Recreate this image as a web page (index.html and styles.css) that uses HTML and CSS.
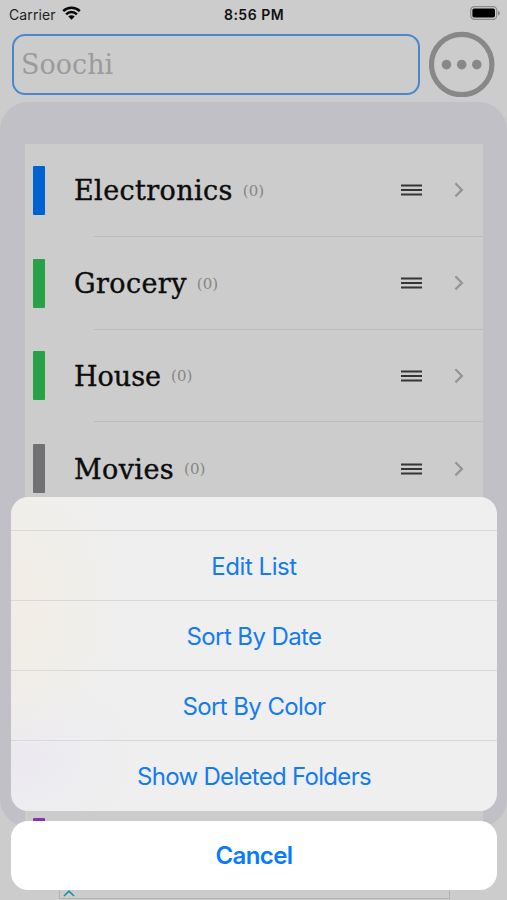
FILE: index.html
```html
<!DOCTYPE html>
<html lang="en">
<head>
<meta charset="utf-8">
<meta name="viewport" content="width=device-width">
<title>Soochi</title>
<link rel="stylesheet" href="styles.css">
</head>
<body>
<svg hidden>
  <symbol id="grip" viewBox="0 0 21 12"><path d="M0 1.5h21M0 6h21M0 10.5h21" stroke="#343536" stroke-width="2.1"/></symbol>
  <symbol id="chevron" viewBox="0 0 10 16"><path d="M1.4 1.3 7.9 7.9 1.4 14.4" fill="none" stroke="#959597" stroke-width="2.2"/></symbol>
</svg>
<div class="screen">
  <header class="status">
    <div class="carrier"><span>Carrier</span>
      <svg class="wifi" width="19" height="14" viewBox="0 0 19 14"><path d="M1.2 5.2a11.8 11.8 0 0 1 16.6 0M4.1 8.3a7.7 7.7 0 0 1 10.8 0" fill="none" stroke="#080808" stroke-width="2.5"/><path d="M6.3 10.6a4.6 4.6 0 0 1 6.4 0L9.5 13.8z" fill="#080808"/></svg>
    </div>
    <div class="time">8:56 PM</div>
    <svg class="battery" width="30" height="14" viewBox="0 0 30 14"><rect x=".7" y=".7" width="26" height="12.6" rx="3.6" fill="none" stroke="#8c8c8c" stroke-width="1.2"/><rect x="2.4" y="2.4" width="22.6" height="9.2" rx="1.8"/><path d="M28 4.8v4.6q2-.6 2-2.3T28 4.8" fill="#888"/></svg>
  </header>
  <div class="search">
    <div class="field">Soochi</div>
    <svg class="more" width="66" height="66" viewBox="0 0 66 66"><circle cx="32.7" cy="33.5" r="30.2" fill="none" stroke="#888" stroke-width="5.2"/><g fill="#888"><circle cx="17.5" cy="33.6" r="4.8"/><circle cx="32.7" cy="33.6" r="4.8"/><circle cx="47.8" cy="33.6" r="4.8"/></g></svg>
  </div>
  <main class="panel">
    <div class="list">
      <div class="row"><i class="tag blue"></i><span class="name">Electronics</span><span class="count">(0)</span><svg class="grip"><use href="#grip"/></svg><svg class="chevron"><use href="#chevron"/></svg></div>
      <div class="row"><i class="tag green"></i><span class="name">Grocery</span><span class="count">(0)</span><svg class="grip"><use href="#grip"/></svg><svg class="chevron"><use href="#chevron"/></svg></div>
      <div class="row"><i class="tag green"></i><span class="name house">House</span><span class="count">(0)</span><svg class="grip"><use href="#grip"/></svg><svg class="chevron"><use href="#chevron"/></svg></div>
      <div class="row"><i class="tag gray"></i><span class="name">Movies</span><span class="count">(0)</span><svg class="grip"><use href="#grip"/></svg><svg class="chevron"><use href="#chevron"/></svg></div>
      <div class="partial"><i class="tag purple"></i></div>
    </div>
  </main>
  <footer class="banner"><svg width="12" height="7" viewBox="0 0 12 7"><path d="M1 6 6 1.2 11 6" fill="none" stroke="#1c93a5" stroke-width="1.7"/></svg></footer>
  <div class="sheet">
    <div class="actions">
      <div class="peek"></div>
      <div class="action edit">Edit List</div>
      <div class="action date">Sort By Date</div>
      <div class="action color">Sort By Color</div>
      <div class="action deleted">Show Deleted Folders</div>
    </div>
    <div class="cancel">Cancel</div>
  </div>
</div>
</body>
</html>
```
FILE: styles.css
```css
* { box-sizing: border-box; }
body { margin: 0; font-family: Inter, "Liberation Sans", sans-serif; }
svg { display: block; flex: none; }
svg[hidden] { display: none; }
.screen {
  position: relative;
  display: flex;
  flex-direction: column;
  width: 507px;
  height: 900px;
  overflow: hidden;
  background: #cccccc;
}
.status {
  display: grid;
  grid-template-columns: 1fr auto 1fr;
  align-items: center;
  height: 28px;
  padding: 0 7px 0 9px;
  color: #111;
  font-size: 14px;
}
.carrier { display: flex; align-items: center; gap: 6px; }
.carrier span { letter-spacing: 0.1px; color: #222; }
.wifi { margin-top: -2px; }
.time { margin-right: 1px; font-weight: 600; font-size: 14px; letter-spacing: 0.5px; }
.battery { justify-self: end; margin-top: -2px; }
.search {
  display: flex;
  justify-content: space-between;
  height: 74px;
  padding: 4px 12px 0 12px;
}
.field {
  width: 408px;
  height: 61px;
  margin-top: 2px;
  padding-left: 7px;
  border: 2px solid #4a88c9;
  border-radius: 13px;
  color: #9b9b9b;
  font: 27px/57px "DejaVu Serif", serif;
}
.more { margin-top: -1px; }
.panel {
  height: 725px;
  padding: 42px 24px 0 25px;
  border-radius: 28px;
  background: #c1c0c6;
}
.list {
  display: flex;
  flex-direction: column;
  height: 683px;
  background: #cccccc;
}
.row {
  display: flex;
  align-items: center;
  height: 92.75px;
  padding: 0 19px 0 8px;
  background: linear-gradient(#bbbbbc, #bbbbbc) right bottom / 389px 1px no-repeat;
}
.tag { width: 12px; height: 49px; border-radius: 1px; }
.blue { background: #0062d1; }
.green { background: #28a248; }
.gray { background: #717174; }
.purple { background: #8a33b5; }
.name {
  margin: 2px 0 0 29px;
  color: #0c0c0c;
  font: 27px/40px "DejaVu Serif", serif;
  letter-spacing: 0.4px;
  -webkit-text-stroke: 0.4px #0c0c0c;
}
.house { letter-spacing: 0; }
.count {
  margin: 1px 0 0 10px;
  color: #868686;
  font: 15px/20px "DejaVu Serif", serif;
}
.grip { width: 21px; height: 12px; margin-left: auto; }
.chevron { width: 10px; height: 16px; margin-left: 32px; }
.partial { margin-top: auto; height: 9px; padding-left: 8px; overflow: hidden; }
.partial .tag { display: block; }
.banner {
  width: 391px;
  height: 20px;
  margin: 52px 0 0 59px;
  padding: 10px 0 0 3px;
  border: 1px solid #b2b2b2;
}
.sheet {
  position: absolute;
  left: 11px;
  right: 10px;
  top: 497px;
  display: flex;
  flex-direction: column;
  gap: 10px;
  text-align: center;
  color: #147bf0;
}
.actions {
  height: 314px;
  border-radius: 17px;
  overflow: hidden;
  background:
    radial-gradient(ellipse 110px 160px at 0 110px, #f2ede4, #f2ede400),
    radial-gradient(ellipse 130px 90px at 0 260px, #ebe9f0, #ebe9f000),
    #efefef;
}
.peek { height: 33px; }
.action {
  height: 70px;
  border-top: 1px solid #d9d9da;
  font-size: 24px;
  line-height: 71px;
}
.edit { letter-spacing: -0.45px; }
.date, .color { letter-spacing: -0.6px; }
.deleted { letter-spacing: -0.7px; }
.cancel {
  height: 69px;
  border-radius: 17px;
  background: #fff;
  color: #087aff;
  font-size: 24px;
  font-weight: 600;
  letter-spacing: -0.6px;
  line-height: 70px;
}
```
